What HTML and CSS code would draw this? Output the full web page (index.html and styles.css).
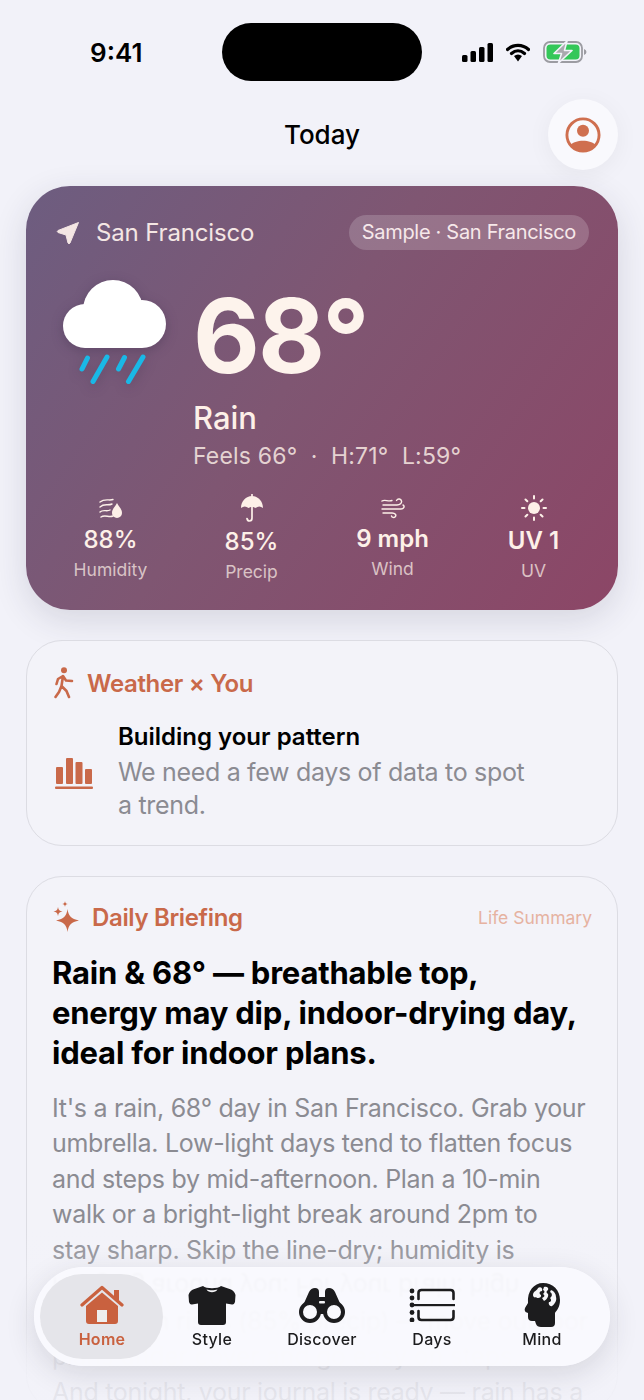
FILE: index.html
```html
<!DOCTYPE html>
<html lang="en">
<head>
  <meta charset="UTF-8" />
  <meta name="viewport" content="width=device-width, initial-scale=1.0" />
  <title>Today</title>
  <link rel="stylesheet" href="styles.css">
</head>
<body>
  <div class="screen">
    <div class="island"></div>

    <div class="status-bar">
      <span class="clock">9:41</span>
      <div class="status-icons">
        <svg class="ic-signal" viewBox="0 0 31 19"><rect x="0" y="12" width="5.5" height="7" rx="1.5"/><rect x="8.5" y="8" width="5.5" height="11" rx="1.5"/><rect x="17" y="4" width="5.5" height="15" rx="1.5"/><rect x="25.5" y="0" width="5.5" height="19" rx="1.5"/></svg>
        <svg class="ic-wifi" viewBox="0 0 24 19"><path d="M1.5 6.5 C7.5 1 16.5 1 22.5 6.5 M5.5 10.5 C9.5 7 14.5 7 18.5 10.5" fill="none" stroke="#000" stroke-width="3.2" stroke-linecap="round"/><path d="M8 13 C10.5 11 13.5 11 16 13 L12 18.5 Z" fill="#000"/></svg>
        <svg class="ic-batt" viewBox="0 0 44 22"><rect x="1" y="1" width="38" height="20" rx="6" fill="none" stroke="#9c9ca2" stroke-width="1.8"/><rect x="3.5" y="3.5" width="33" height="15" rx="4" fill="#34c759"/><path d="M41 8 q2.5 1 2.5 3 t-2.5 3 z" fill="#9c9ca2"/><path d="M24 0 L11 12.5 H18.5 L15.5 22 L29 9.5 H21.5 Z" fill="#a9a9ae" stroke="#f2f2f9" stroke-width="1.6" stroke-linejoin="round"/></svg>
      </div>
    </div>

    <header class="topbar">
      <h1 class="title">Today</h1>
      <button class="profile-btn">
        <svg viewBox="0 0 30 30"><circle cx="15" cy="15" r="13.4" fill="none" stroke="#cf6f4f" stroke-width="2.4"/><circle cx="15" cy="11.5" r="5" fill="#cf6f4f"/><path d="M4.500 23.500 C8 18.500 22 18.500 25.500 23.500 C22 29.500 8 29.500 4.500 23.500 Z" fill="#cf6f4f"/></svg>
      </button>
    </header>

    <section class="weather-card">
      <div class="loc-row">
        <div class="loc">
          <svg class="ic-arrow" viewBox="0 0 24 24"><path d="M22.5 1.5 L14 22 Q13 23.5 12 22 L10 14 L2 11.5 Q0.5 10.5 2 9.5 Z" fill="#f4e6e4" stroke="#f4e6e4" stroke-width="1" stroke-linejoin="round"/></svg>
          <span>San Francisco</span>
        </div>
        <span class="sample-pill">Sample · San Francisco</span>
      </div>

      <div class="hero">
        <svg class="ic-cloud" viewBox="0 0 106 106">
          <g fill="#fff">
            <circle cx="23" cy="46" r="22"/>
            <circle cx="51" cy="30" r="30"/>
            <circle cx="80" cy="44" r="24"/>
            <rect x="23" y="40" width="57" height="28"/>
          </g>
          <g stroke="#1ab8e6" stroke-width="5" stroke-linecap="round">
            <line x1="20" y1="89" x2="25.5" y2="78"/>
            <line x1="31" y1="101.5" x2="45" y2="77"/>
            <line x1="56.5" y1="89" x2="62.5" y2="77.5"/>
            <line x1="66.5" y1="101.5" x2="81" y2="77"/>
          </g>
        </svg>
        <div class="hero-text">
          <div class="temp">68°</div>
          <div class="cond">Rain</div>
          <div class="feels">Feels 66° &nbsp;·&nbsp; H:71° &nbsp;L:59°</div>
        </div>
      </div>

      <div class="stats">
        <div class="stat">
          <svg class="ic-stat ic-h24" viewBox="0 0 24 24" fill="none" stroke="#fdf0e8" stroke-width="1.4" stroke-linecap="round"><path d="M1 6 C6 2 10 5 14 3.5 M1 11 C5 7 9 10 13 8 M1 16 C4 13 8 16 11 14 M2 21 C6 18 10 22 14 20"/><path d="M18 7 C20 11 23 13 23 17 A5 5 0 0 1 13 17 C13 13 16 11 18 7 Z" fill="#fdf0e8" stroke="none"/></svg>
          <div class="stat-val">88%</div>
          <div class="stat-lbl">Humidity</div>
        </div>
        <div class="stat">
          <svg class="ic-stat ic-h28" viewBox="0 0 24 28" fill="none" stroke="#fdf0e8" stroke-width="1.7" stroke-linecap="round"><path d="M12 2 C18 2 23 7 23 14 C20.5 12 18 12 15.5 14 C14 12.5 10 12.5 8.5 14 C6 12 3.5 12 1 14 C1 7 6 2 12 2 Z" fill="#fdf0e8" stroke="none"/><path d="M12 0.5 V2 M12 13 V24 Q12 27 9.5 27 Q7.5 27 7 24.5"/></svg>
          <div class="stat-val">85%</div>
          <div class="stat-lbl">Precip</div>
        </div>
        <div class="stat">
          <svg class="ic-stat ic-h22" viewBox="0 0 24 22" fill="none" stroke="#fdf0e8" stroke-width="1.4" stroke-linecap="round"><path d="M2 8 H16 C19 8 21 6 20.5 4 C20 2 17 1 15.5 3.5 M1 4 C4 2 7 5 11 3.5 M1 12 H20 C23 12 24 9 22 8 M2 16 H11 C14 16 16 18 14 20 C13 21 11 20.5 10.5 19"/></svg>
          <div class="stat-val stat-strong">9 mph</div>
          <div class="stat-lbl">Wind</div>
        </div>
        <div class="stat">
          <svg class="ic-stat ic-h26" viewBox="0 0 26 26" fill="none" stroke="#fdf0e8" stroke-width="2" stroke-linecap="round"><circle cx="13" cy="13" r="6" fill="#fdf0e8" stroke="none"/><path d="M13 1 V3.5 M13 22.5 V25 M1 13 H3.5 M22.5 13 H25 M4.5 4.5 L6.3 6.3 M19.7 19.7 L21.5 21.5 M4.5 21.5 L6.3 19.7 M19.7 6.3 L21.5 4.5"/></svg>
          <div class="stat-val stat-strong">UV 1</div>
          <div class="stat-lbl">UV</div>
        </div>
      </div>
    </section>

    <section class="card card-you">
      <div class="card-head">
        <svg class="ic-walk" viewBox="0 0 20 32" fill="none" stroke="#c9694a" stroke-width="2.6" stroke-linecap="round" stroke-linejoin="round"><circle cx="10" cy="3.2" r="3" fill="#c9694a" stroke="none"/><path d="M9 9 L7.5 19 L12.5 24 L15 30 M7.5 19 L5 25 L1.5 30 M9 9 L4 12 L2.5 17 M9 9 L12 13.5 L18 14"/></svg>
        <span>Weather × You</span>
      </div>
      <div class="pattern">
        <svg class="ic-bars" viewBox="0 0 38 32" fill="#c9694a"><rect x="1" y="10" width="7" height="17" rx="1"/><rect x="11" y="1" width="7" height="26" rx="1"/><rect x="20.500" y="5" width="7" height="22" rx="1"/><rect x="30" y="12" width="7" height="15" rx="1"/><rect x="0" y="29.500" width="38" height="2.500" rx="1"/></svg>
        <div class="pattern-text">
          <div class="pattern-title">Building your pattern</div>
          <div class="pattern-desc">We need a few days of data to spot<br>a trend.</div>
        </div>
      </div>
    </section>

    <section class="card card-brief">
      <div class="card-head">
        <svg class="ic-spark" viewBox="0 0 26 32" fill="#c9694a"><path d="M14.500 8 C15.500 15 18 18 26 19.500 C18 21 15.500 24 14.500 31 C13.500 24 11 21 3 19.500 C11 18 13.500 15 14.500 8 Z"/><path d="M5 6 C5.500 9 6.500 10 9.500 10.500 C6.500 11 5.500 12 5 15 C4.500 12 3.500 11 0.500 10.500 C3.500 10 4.500 9 5 6 Z"/><path d="M12 0 C12.200 2 12.800 2.600 15 3 C12.800 3.400 12.200 4 12 6 C11.800 4 11.200 3.400 9 3 C11.200 2.600 11.800 2 12 0 Z"/></svg>
        <span>Daily Briefing</span>
        <span class="head-note">Life Summary</span>
      </div>
      <h2 class="brief-title">Rain &amp; 68° — breathable top,<br>energy may dip, indoor-drying day,<br>ideal for indoor plans.</h2>
      <p class="brief-body">It's a rain, 68° day in San Francisco. Grab your<br>umbrella. Low-light days tend to flatten focus<br>and steps by mid-afternoon. Plan a 10-min<br>walk or a bright-light break around 2pm to<br>stay sharp. Skip the line-dry; humidity is<br><span class="mirrored">hanging around you: For your brain: high</span><br>When rain rises (85% precip) — move outdoor<br>plans under cover and go easy on steps.<br>And tonight, your journal is ready — rain has a</p>
    </section>

    <div class="fade"></div>

    <nav class="tabbar">
      <a class="tab tab-active">
        <div class="tab-icon"><svg class="ic-home" viewBox="0 0 44 40"><path d="M2 20 L22 2.500 L42 20" fill="none" stroke="#c9613f" stroke-width="3.200" stroke-linecap="round" stroke-linejoin="round"/><rect x="34" y="5" width="5" height="10" fill="#c9613f"/><path d="M6 21 L22 7.500 L38 21 V36 Q38 39 35 39 H9 Q6 39 6 36 Z M17 25 V37 H27 V25 Z" fill="#c9613f" fill-rule="evenodd"/><rect x="17" y="25" width="10" height="12" fill="#eee"/></svg></div>
        <span>Home</span>
      </a>
      <a class="tab">
        <div class="tab-icon"><svg class="ic-tee" viewBox="0 0 48 40"><path d="M15 1 C18 4 30 4 33 1 L43 4.500 Q46.500 6 47.500 10 L47 17 Q46 20 44 19.500 L38 18.500 V37 Q38 40 35 40 H13 Q10 40 10 37 V18.500 L4 19.500 Q2 20 1 17 L0.500 10 Q1.500 6 5 4.500 Z" fill="#1c1c1e"/><path d="M18.500 4.500 C20.500 8 27.500 8 29.500 4.500 C26.500 5.500 21.500 5.500 18.500 4.500 Z" fill="#f4f4f6"/></svg></div>
        <span>Style</span>
      </a>
      <a class="tab">
        <div class="tab-icon"><svg class="ic-bino" viewBox="0 0 46 35"><path d="M2 22 L10 4 Q12 0 16 0 Q20 0 20 4 V9 H26 V4 Q26 0 30 0 Q34 0 36 4 L44 22 L30 26 H16 Z" fill="#1c1c1e"/><rect x="20" y="13" width="6" height="2.500" rx="1" fill="#f4f4f6"/><circle cx="11" cy="24" r="9" fill="#f9f9fd" stroke="#1c1c1e" stroke-width="4"/><circle cx="35" cy="24" r="9" fill="#f9f9fd" stroke="#1c1c1e" stroke-width="4"/></svg></div>
        <span>Discover</span>
      </a>
      <a class="tab">
        <div class="tab-icon"><svg class="ic-days" viewBox="0 0 46 34"><g fill="#1c1c1e"><circle cx="3" cy="3" r="2.400"/><circle cx="3" cy="10" r="2.400"/><circle cx="3" cy="17" r="2.400"/><circle cx="3" cy="24.500" r="2.400"/><circle cx="3" cy="32" r="2.400"/><rect x="3" y="16" width="43" height="2.200"/></g><path d="M9.500 11 V5 Q9.500 2 12.500 2 H41.500 Q44.500 2 44.500 5 V11 M9.500 23 V29 Q9.500 32 12.500 32 H41.500 Q44.500 32 44.500 29 V23" fill="none" stroke="#1c1c1e" stroke-width="2.600" stroke-linecap="round"/></svg></div>
        <span>Days</span>
      </a>
      <a class="tab">
        <div class="tab-icon"><svg class="ic-mind" viewBox="0 0 36 44"><path d="M19 0 C29 0 36 7 36 17 C36 24 33 27 31 30 V40 Q31 44 27 44 H17 Q13 44 12 41 L11 38 H8 Q4 38 4 34 V30 L1.500 29 Q0 27 1 25 L4 20 C3 8 10 0 19 0 Z" fill="#1c1c1e"/><g fill="#f7f7fa"><path d="M9 12 C9 8 13 8 14 5 C17 3 19 6 18 8 C15 8 15 11 17 12 C18 15 13 16 12 14 C11 15 9 14 9 12 Z"/><path d="M20 4 C23 3 25 5 24 7 C22 8 22 10 24 11 C25 14 22 17 20 18 L18 15 C21 14 21 12 19 11 C21 9 21 8 19 7 Z"/><path d="M27 7 C30 8 32 11 32 14 C33 17 31 21 28 23 C26 24 24 21 25 19 C27 19 28 17 26 15 C29 13 28 10 26 9 Z"/></g></svg></div>
        <span>Mind</span>
      </a>
    </nav>
  </div>
</body>
</html>
```

FILE: styles.css
```css
html, body {
  margin: 0;
  padding: 0;
  background: #f2f2f9;
  color: #000;
  font-family: 'Inter', 'Liberation Sans', sans-serif;
}

.screen {
  position: relative;
  width: 644px;
  height: 1400px;
  overflow: hidden;
  background: #f2f2f9;
}

.island {
  position: absolute;
  left: 222px;
  top: 23px;
  width: 200px;
  height: 58px;
  border-radius: 29px;
  background: #000;
}

/* status bar */
.status-bar {
  display: flex;
  justify-content: space-between;
  align-items: center;
  height: 99px;
  padding: 5px 57px 0 90px;
  box-sizing: border-box;
}

.clock {
  font-size: 26px;
  font-weight: 600;
}

.status-icons {
  display: flex;
  align-items: center;
  gap: 13px;
}

.ic-signal { width: 31px; height: 19px; fill: #000; }
.ic-wifi { width: 24px; height: 19px; }
.ic-batt { width: 44px; height: 22px; }

/* title row */
.topbar {
  display: flex;
  justify-content: center;
  align-items: center;
  position: relative;
  height: 71px;
}

.title {
  margin: 0;
  font-size: 26px;
  font-weight: 500;
}

.profile-btn {
  position: absolute;
  right: 26px;
  top: 0;
  width: 70px;
  height: 71px;
  padding: 0;
  border: none;
  border-radius: 50%;
  background: #f9f9fd;
  box-shadow: 0 4px 24px rgba(0, 0, 0, 0.05);
  display: flex;
  align-items: center;
  justify-content: center;
}

.profile-btn svg { width: 36px; height: 36px; }

/* weather */
.weather-card {
  margin: 16px 26px 0;
  height: 424px;
  box-sizing: border-box;
  padding: 29px 29px 0 30px;
  border-radius: 44px;
  background: linear-gradient(125deg, #6d5d80 0%, #7f5672 45%, #8c4666 100%);
  box-shadow: 0 10px 34px rgba(40, 40, 70, 0.14);
  color: #fdf0e8;
}

.loc-row {
  display: flex;
  justify-content: space-between;
  align-items: center;
  height: 35px;
}

.loc {
  display: flex;
  align-items: center;
  gap: 16px;
  font-size: 24px;
  letter-spacing: -0.15px;
  color: #f4e6e4;
}

.ic-arrow { width: 24px; height: 24px; }

.sample-pill {
  padding: 0 13px;
  height: 35px;
  line-height: 35px;
  border-radius: 18px;
  background: rgba(255, 255, 255, 0.18);
  font-size: 20px;
  letter-spacing: -0.3px;
  color: #f6e8ea;
}

.hero {
  display: flex;
  align-items: flex-start;
  gap: 25px;
  margin: 30px 0 0 6px;
}

.ic-cloud {
  width: 106px;
  height: 106px;
  filter: drop-shadow(0 3px 6px rgba(30, 20, 50, 0.25));
}

.temp {
  margin-top: 2px;
  font-size: 103px;
  font-weight: 700;
  line-height: 108px;
  letter-spacing: -2px;
  color: #fdf3ec;
}

.cond {
  margin-top: 8px;
  font-size: 31px;
  font-weight: 500;
  line-height: 40px;
}

.feels {
  margin-top: 2px;
  font-size: 23px;
  line-height: 32px;
  letter-spacing: 0.2px;
  color: rgba(253, 240, 232, 0.82);
}

.stats {
  display: grid;
  grid-template-columns: repeat(4, 141px);
  margin: 22px 0 0 -16px;
  height: 82px;
}

.stat {
  display: flex;
  flex-direction: column;
  align-items: center;
  justify-content: center;
}

.ic-stat { width: 26px; }
.ic-h22 { height: 22px; }
.ic-h24 { height: 24px; }
.ic-h26 { height: 26px; }
.ic-h28 { height: 28px; }

.stat-val {
  margin-top: 5px;
  font-size: 24px;
  font-weight: 500;
  line-height: 30px;
}

.stat-strong { font-weight: 600; }

.stat-lbl {
  margin-top: 3px;
  font-size: 17.5px;
  line-height: 24px;
  color: rgba(253, 240, 232, 0.72);
}

/* plain cards */
.card {
  margin: 30px 26px 0;
  padding: 0 25px;
  border: 1px solid #dcdce3;
  border-radius: 36px;
  background: #f3f3f9;
}

.card-you { height: 206px; box-sizing: border-box; padding: 26px 25px 0 27px; }
.card-brief { padding-top: 24px; }

.card-head {
  display: flex;
  align-items: center;
  gap: 13px;
  height: 32px;
  font-size: 24px;
  font-weight: 600;
  letter-spacing: -0.35px;
  color: #c9694a;
}

.ic-walk { width: 20px; height: 32px; }
.ic-spark { width: 26px; height: 32px; margin-left: 1px; }

.head-note {
  margin-left: auto;
  font-size: 17.5px;
  font-weight: 400;
  letter-spacing: 0;
  color: #e6b2a1;
}

.pattern {
  display: flex;
  align-items: center;
  gap: 25px;
  margin-top: 22px;
  padding-left: 1px;
}

.ic-bars { width: 38px; height: 32px; flex: none; margin-top: 2px; }

.pattern-title {
  font-size: 24px;
  font-weight: 600;
  line-height: 32px;
}

.pattern-desc {
  margin-top: 3px;
  font-size: 25px;
  line-height: 33px;
  letter-spacing: -0.32px;
  color: #8b8b92;
}

.brief-title {
  margin: 20px 0 0;
  font-size: 31px;
  font-weight: 700;
  line-height: 40px;
  letter-spacing: -0.2px;
}

.brief-body {
  margin: 17.5px 0 0;
  font-size: 25px;
  line-height: 35.5px;
  letter-spacing: -0.3px;
  white-space: nowrap;
  color: #8b8b92;
}

.mirrored {
  display: inline-block;
  transform: scaleY(-1);
}

/* bottom fade + tab bar */
.fade {
  position: absolute;
  left: 0;
  right: 0;
  bottom: 0;
  height: 170px;
  background: linear-gradient(rgba(242, 242, 249, 0), rgba(242, 242, 249, 0.88) 75%);
}

.tabbar {
  position: absolute;
  z-index: 1;
  left: 34px;
  bottom: 34px;
  width: 576px;
  height: 99px;
  box-sizing: border-box;
  padding: 16px 13px 0;
  display: flex;
  border-radius: 50px;
  background: rgba(250, 250, 254, 0.93);
  backdrop-filter: blur(1px);
  box-shadow: 0 8px 30px rgba(40, 40, 60, 0.14);
}

.tab {
  position: relative;
  flex: 1;
  display: flex;
  flex-direction: column;
  align-items: center;
  font-size: 16px;
  font-weight: 500;
  letter-spacing: 0.3px;
  color: #1c1c1e;
}

.tab-icon {
  display: flex;
  align-items: center;
  justify-content: center;
  height: 44px;
}

.tab span {
  margin-top: 2px;
  line-height: 20px;
}

.tab-active { color: #c9613f; font-weight: 600; }

.tab-active::before {
  content: "";
  position: absolute;
  z-index: -1;
  left: -7px;
  top: -9px;
  width: 123px;
  height: 85px;
  border-radius: 43px;
  background: #e5e5ea;
}

.ic-home { width: 44px; height: 40px; }
.ic-tee { width: 48px; height: 40px; }
.ic-bino { width: 46px; height: 35px; }
.ic-days { width: 46px; height: 34px; }
.ic-mind { width: 36px; height: 44px; }
```
